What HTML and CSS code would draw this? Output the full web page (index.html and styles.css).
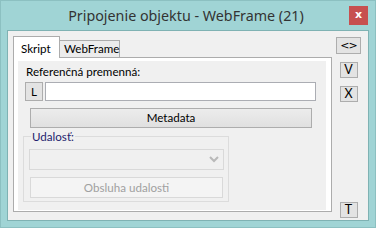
FILE: index.html
```html
<!DOCTYPE html>
<html>
<head>
<meta charset="utf-8">
<link rel="stylesheet" href="styles.css">
</head>
<body>
<div class="window">
  <div class="titlebar">
    <div class="title">Pripojenie objektu - WebFrame (21)</div>
    <div class="close">x</div>
  </div>
  <div class="client">
    <div class="tabs">
      <div class="tabstrip">
        <div class="tab active">Skript</div>
        <div class="tab">WebFrame</div>
      </div>
      <div class="panel">
        <div class="page">
          <div class="label">Referenčná premenná:</div>
          <div class="refrow">
            <div class="btn small">L</div>
            <div class="input"></div>
          </div>
          <div class="btn meta">Metadata</div>
          <fieldset class="group">
            <legend>Udalosť:</legend>
            <div class="combo">
              <svg class="chev" width="10" height="7" viewBox="0 0 10 7"><path d="M1 1 L5 5 L9 1" fill="none" stroke="#b9b9b9" stroke-width="2"/></svg>
            </div>
            <div class="btn disabled">Obsluha udalosti</div>
          </fieldset>
        </div>
      </div>
    </div>
    <div class="side">
      <div class="btn sbtn wide">&lt;&gt;</div>
      <div class="btn sbtn">V</div>
      <div class="btn sbtn">X</div>
      <div class="spacer"></div>
      <div class="btn sbtn">T</div>
    </div>
  </div>
</div>
</body>
</html>
```
FILE: styles.css
```css
* { box-sizing: border-box; }
html, body { margin: 0; padding: 0; }
body { width: 376px; height: 228px; overflow: hidden; font-family: Lato, "Noto Sans", sans-serif; font-size: 11.6px; color: #000; }
.window { width: 376px; height: 228px; background: #a0d4d5; border: 1px solid #8cc0c1; display: flex; flex-direction: column; padding: 0 6px 6px 6px; }
.titlebar { height: 29px; display: flex; align-items: flex-start; }
.title { flex: 1; text-align: center; font-family: "Noto Sans", sans-serif; font-size: 14.3px; color: #333; padding-top: 5px; padding-left: 16px; }
.close { width: 19px; height: 19px; margin-top: 5px; margin-right: 1px; background: #c75050; color: #fff; font-weight: bold; font-size: 11px; line-height: 17px; text-align: center; font-family: "DejaVu Sans", sans-serif; }
.client { flex: 1; background: #f0f0f0; border: 1px solid #7fb2b3; display: flex; padding: 5px 0 0 5px; }
.tabs { width: 319px; height: 176px; display: flex; flex-direction: column; }
.tabstrip { height: 21px; display: flex; align-items: flex-end; }
.tab { height: 17px; border: 1px solid #acacac; border-bottom: none; background: #ececec; padding: 0 0 0 4px; line-height: 16px; margin-left: -1px; width: 61px; }
.tab.active { height: 22px; margin-bottom: -1px; margin-left: 0; background: #fff; position: relative; z-index: 1; width: 47px; padding-left: 7px; line-height: 23px; }
.panel { flex: 1; border: 1px solid #acacac; background: #fff; padding: 3px 5px 1px 4px; }
.page { height: 100%; background: #f0f0f0; padding: 3px 0 0 7px; }
.label { height: 15px; line-height: 15px; padding-left: 1px; }
.refrow { display: flex; gap: 2px; margin-top: 3px; }
.btn { border: 1px solid #adadad; background: #e3e3e3; text-align: center; }
.small { width: 18px; height: 19px; line-height: 17px; }
.input { width: 271px; height: 19px; border: 1px solid #abadb3; background: #fff; }
.meta { width: 282px; height: 20px; line-height: 18px; margin: 7px 0 0 5px; background: linear-gradient(#ececec, #e0e0e0); }
.group { margin: 2px 0 0 -2px; width: 206px; height: 72px; border: 1px solid #dcdcdc; padding: 6px 4px 0 5px; }
.group legend { padding: 0 1px; margin-left: 2px; color: #1e1e6e; line-height: 13px; }
.combo { width: 195px; height: 21px; border: 1px solid #d9d9d9; background: #f0f0f0; display: flex; justify-content: flex-end; align-items: center; padding-right: 4px; }
.disabled { width: 193px; height: 21px; margin: 7px 0 0 1px; border-color: #d9d9d9; background: #f4f4f4; color: #a0a0a0; line-height: 19px; }
.side { width: 33px; height: 182px; display: flex; flex-direction: column; align-items: center; padding-top: 1px; }
.sbtn { width: 18px; height: 16px; line-height: 14px; font-size: 12.5px; margin-top: 8px; }
.sbtn.wide { width: 25px; height: 17px; margin-top: 0; line-height: 15px; font-family: "DejaVu Sans", sans-serif; font-size: 11px; letter-spacing: -1px; }
.spacer { flex: 1; }
```
